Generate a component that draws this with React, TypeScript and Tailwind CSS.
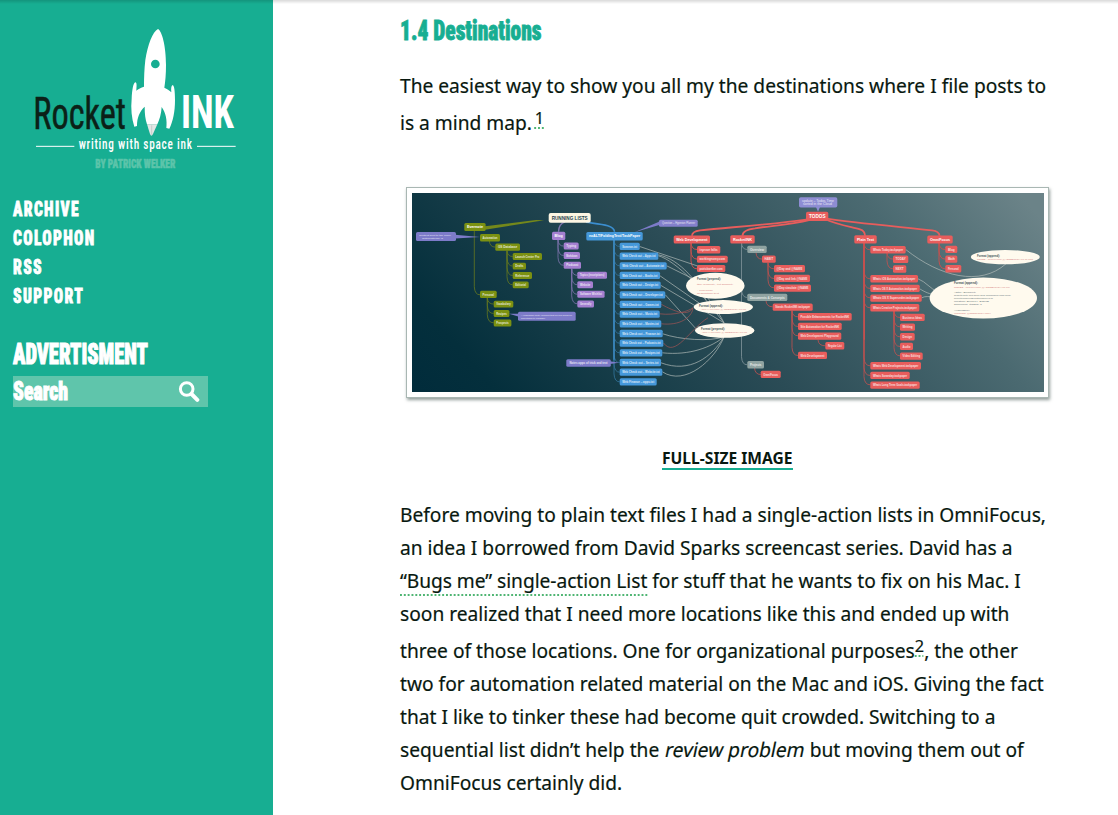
import type { ReactNode } from "react";

const OLIVE = "#7b9112";
const PURPLE = "#a47fd0";
const NOTE = "#7d7bc9";
const BLUE = "#4598da";
const RED = "#e85d5c";
const GRAY = "#8fa3a1";

type MapNode = [x: number, y: number, w: number, h: number, fill: string, label: string];

const nodes: MapNode[] = [
  [464.3, 223.3, 21.3, 8, OLIVE, "Evernote"],
  [480, 234.3, 20, 7.3, OLIVE, "Automation"],
  [495.3, 243.7, 24.7, 7.3, OLIVE, "GS Database"],
  [512.7, 253.3, 29.3, 6.8, OLIVE, "Launch Center Pro"],
  [512.7, 263, 13.3, 6.8, OLIVE, "Drafts"],
  [512.7, 272.3, 19.3, 6.8, OLIVE, "Reference"],
  [512.7, 281.7, 16, 6.8, OLIVE, "Editorial"],
  [480, 291, 16.7, 7.3, OLIVE, "Personal"],
  [493.7, 301, 19.6, 6.8, OLIVE, "Vocabulary"],
  [493.7, 310.3, 15.7, 6.8, OLIVE, "Recipes"],
  [493.7, 319.8, 17.7, 6.8, OLIVE, "Prospects"],
  [552, 232, 13.3, 8.3, PURPLE, "Blog"],
  [563.7, 242.7, 15, 7, PURPLE, "Typing"],
  [563.7, 252.3, 16.3, 7, PURPLE, "Markdown"],
  [563.7, 262, 17.3, 7, PURPLE, "Podcast"],
  [577.3, 272, 29.7, 7, PURPLE, "Topics (inscriptions)"],
  [577.3, 281.5, 15.7, 7, PURPLE, "Website"],
  [577.3, 291, 27.3, 7, PURPLE, "Software Wishlist"],
  [577.3, 300.7, 16.7, 7, PURPLE, "Generally"],
  [586.3, 232.2, 56.4, 8.5, BLUE, "nxALT/FoldingText/TaskPaper"],
  [673.7, 235.7, 36.3, 8, RED, "Web Development"],
  [697, 246.3, 23.3, 7.3, RED, "inprove falks"],
  [697, 256, 30.7, 7, RED, "workingnomy.com"],
  [697, 265.3, 28.3, 7, RED, "patrickwelker.com"],
  [730.3, 235.5, 24.4, 8.3, RED, "RocketINK"],
  [747.3, 246, 19.4, 7.3, GRAY, "Overview"],
  [762, 255.7, 13.7, 7.3, RED, "HABIT"],
  [774, 265.3, 31, 7.2, RED, "@Day and @NAME"],
  [774, 275, 36, 7.2, RED, "@Day and link @NAME"],
  [774, 284.7, 37, 7.2, RED, "@Day simulate @NAME"],
  [747.3, 294, 40, 7.3, GRAY, "Documents & Concepts"],
  [772.7, 303.7, 40, 7.3, RED, "Stands RocketINK taskpaper"],
  [798, 313.3, 53.7, 7.3, RED, "Possible Enhancements for RocketINK"],
  [798, 323, 43.7, 7.3, RED, "Site Automation for RocketINK"],
  [798, 332.7, 43.3, 7.3, RED, "Web Development Playground"],
  [825.3, 342.3, 19, 7.3, RED, "Regular List"],
  [798, 352, 29, 7.3, RED, "Web Development"],
  [747.3, 361.3, 16.7, 7.3, GRAY, "Projects"],
  [760.7, 371, 20, 7.3, RED, "OmniFocus"],
  [854.3, 235.5, 22.4, 8.2, RED, "Plain Text"],
  [870.3, 246.3, 35.4, 7.3, RED, "Whats Today.taskpaper"],
  [893, 255.7, 15.3, 7.5, RED, "TODAY"],
  [893, 265.5, 13.3, 7.5, RED, "NEXT"],
  [870.3, 275.3, 47.7, 7.3, RED, "Whats iOS Automation.taskpaper"],
  [870.3, 285, 49.4, 7.3, RED, "Whats OS X Automation.taskpaper"],
  [870.3, 294.7, 51.4, 7.3, RED, "Whats OS X Superseder.taskpaper"],
  [870.3, 304.3, 49, 7.3, RED, "Whats Creative Projects.taskpaper"],
  [900, 314, 24.7, 7.3, RED, "Business Ideas"],
  [900, 323.7, 15, 7.3, RED, "Writing"],
  [900, 333.3, 14.7, 7.3, RED, "Design"],
  [900, 343, 13, 7.3, RED, "Audio"],
  [900, 352.7, 22.7, 7.3, RED, "Video Editing"],
  [870.3, 362.3, 50.7, 7.3, RED, "Whats Web Development.taskpaper"],
  [870.3, 372, 39.4, 7.3, RED, "Whats Someday.taskpaper"],
  [870.3, 381.7, 49.4, 7.3, RED, "Whats Long Term Goals.taskpaper"],
  [927.3, 235.7, 25.4, 8, RED, "OmniFocus"],
  [945.3, 246, 12, 7.3, RED, "Blog"],
  [945.3, 255.7, 12, 7.3, RED, "Math"],
  [945.3, 265.3, 16, 7.3, RED, "Personal"],
];

const blueLabels: [number, string][] = [
  [639.7, "Someon.txt"],
  [658.3, "Web Check out – Apps.txt"],
  [666.7, "Web Check out – Automate.txt"],
  [660, "Web Check out – Books.txt"],
  [660.7, "Web Check out – Design.txt"],
  [665.3, "Web Check out – Developer.txt"],
  [661.3, "Web Check out – Games.txt"],
  [659.7, "Web Check out – Music.txt"],
  [661.3, "Web Check out – Movies.txt"],
  [662.7, "Web Check out – Finance.txt"],
  [663.3, "Web Check out – Podcasts.txt"],
  [662.3, "Web Check out – Recipes.txt"],
  [661, "Web Check out – Series.txt"],
  [662.3, "Web Check out – Website.txt"],
  [656.7, "Web Finance – apps.txt"],
];

const blueNodes: MapNode[] = blueLabels.map(([end, label], i) => [
  619.7,
  243 + i * 9.67,
  end - 619.7,
  7.3,
  BLUE,
  label,
]);

function elbows(trunkX: number, startY: number, childX: number, ys: number[]) {
  return ys
    .map((y) => {
      const r = Math.min(y - startY, 8);
      return `M${trunkX} ${startY}V${y - r}Q${trunkX + 0.5} ${y} ${childX} ${y}`;
    })
    .join("");
}

const blueYs = blueLabels.map((_, i) => 246.7 + i * 9.67);

function Mini({ x, y, w, size = 2.9, fill = "#fff", bold = false, children }: {
  x: number; y: number; w: number; size?: number; fill?: string; bold?: boolean; children: string;
}) {
  return (
    <text x={x} y={y} fontSize={size} fill={fill} fontWeight={bold ? 700 : 400} textLength={w} lengthAdjust="spacingAndGlyphs">
      {children}
    </text>
  );
}

function MindMap() {
  return (
    <svg
      className="block h-[199px] w-[632px]"
      viewBox="412 193.2 632 199"
      fontFamily="'Liberation Sans', sans-serif"
      role="img"
      aria-label="Mind map"
    >
      <defs>
        <linearGradient id="sky" gradientUnits="userSpaceOnUse" x1="470" y1="480" x2="925" y2="85">
          <stop offset="0" stopColor="#002b3b" />
          <stop offset="0.13" stopColor="#042f3c" />
          <stop offset="0.5" stopColor="#2b4c56" />
          <stop offset="0.8" stopColor="#4b6a71" />
          <stop offset="1" stopColor="#6b8388" />
        </linearGradient>
      </defs>
      <rect x="412" y="193" width="632" height="200" fill="url(#sky)" />

      <g fill="none" strokeWidth="0.8">
        <g stroke="#64791f">
          <path d={elbows(474.3, 231, 480, [295])} />
          <path d={elbows(489.3, 241, 495.3, [247.3])} />
          <path d={elbows(507, 251, 512.7, [256.7, 266.3, 275.7, 285])} />
          <path d={elbows(487.3, 298, 493.7, [304.3, 313.7, 323])} />
        </g>
        <g stroke="#7f74ae">
          <path d={elbows(558, 240, 563.7, [246.3, 255.7, 265.5])} />
          <path d={elbows(571.7, 269, 577.3, [275.5, 285, 294.5, 304])} />
          <path d="M565 222Q558.7 224 558.5 232" strokeWidth="1.4" />
        </g>
        <g stroke="#34769f">
          <path d={elbows(614, 240, 619.7, blueYs)} />
          <path d="M614 240V360" stroke="#3d8ac4" strokeWidth="1.3" />
        </g>
        <path d="M586 222.5C600 224.500 614 225 614.5 232" stroke="#3b8ecf" strokeWidth="1.6" />
        <g stroke="#c4514f">
          <path d={elbows(691, 243, 697, [249.7, 259.3, 269])} strokeWidth="1" />
          <path d={elbows(756, 253, 762, [259.3])} />
          <path d={elbows(768, 263, 774, [269, 278.7, 288])} />
          <path d={elbows(766, 301, 772.7, [307])} />
          <path d={elbows(792, 311, 798, [317, 326.7, 336, 355.7])} />
          <path d={elbows(818, 340, 825.3, [346])} />
          <path d={elbows(754.5, 368, 760.7, [374.7])} />
          <path d={elbows(864, 243, 870.3, [250, 279, 288.7, 298, 308, 366, 375.7, 385])} />
          <path d="M864.3 243V340" strokeWidth="1.3" />
          <path d={elbows(887, 253, 893, [259.3, 269])} />
          <path d={elbows(894, 311, 900, [317.7, 327, 337, 346.7, 356])} />
          <path d={elbows(939, 243, 945.3, [249.7, 259.3, 269])} strokeWidth="1" />
        </g>
        <g stroke="#71878e">
          <path d={elbows(741.5, 243, 747.3, [249.7, 297.7, 365])} strokeWidth="1" />
        </g>
        <g stroke={RED} strokeWidth="1.8">
          <path d="M808 219.5C770 225 735 227 700 230.5Q692 231.5 692 236" />
          <path d="M810 220C790 225 770 226 755 228.5Q742.5 230 742.5 236" />
          <path d="M824 219C840 226 852 227 860 229.5Q865 231 865 236" />
          <path d="M824 218.5C855 223 900 227 932 230.5Q939.5 231.5 939.5 236" />
        </g>
        <g stroke="#b0bab8" strokeWidth="0.7">
          <path d="M639.7 246.7L700 267" />
          <path d="M658.3 256C675 260 710 295 724 323" />
          <path d="M666.7 266L695 280M660 276L706 308M660.7 285.500L724 323M665.300 295L696 329" />
          <path d="M662.700 334C680 340 710 342 724 337M662.300 353C690 356 712 347 724 337M661 363C690 374 712 357 724 337M662.300 372C685 387 715 360 724 337" />
          <path d="M658.300 255C680 259 700 285 706 300M700 293L724 323" />
          <path d="M905.700 249.700C940 277 980 287 1006 264" />
          <path d="M918 279C926 282 930 289 938 292M919.700 289C926 293 930 294 934 295M921.700 298C925 296 930 297 932 297" />
        </g>
        <g stroke="#a25555" strokeWidth="0.7">
          <path d="M661.300 304.500C675 312 688 317 693 308M659.700 314C675 316 689 311 693 308M661.300 324C680 326 691 318 693 309M663.300 343C675 359 690 329 708 318" />
        </g>
      </g>

      <path d="M485 226.500L536 220.300L544 220.500L485 230Z" fill="#74881b" />
      <g fill={NOTE}>
        <path d="M455 235L480 237.300L455 238.700Z" />
        <path d="M519 314L509 314L519 317Z" />
        <path d="M610 361.500L619 363L610 364.300Z" />
        <path d="M659 222L634.500 232.500L660 225Z" />
        <path d="M815.500 206L818 212L820.500 206Z" fill="#8e8dd3" />
        <rect x="416" y="232.300" width="40" height="9" rx="1.600" />
        <rect x="518" y="312" width="57.700" height="9" rx="1.600" />
        <rect x="566.300" y="359.500" width="44.500" height="7.500" rx="1.500" />
        <rect x="659" y="220" width="38.700" height="7" rx="1.500" fill="#8380cc" />
        <rect x="799" y="197.500" width="38.300" height="10.300" rx="1.800" fill="#8e8dd3" />
      </g>
      <g opacity="0.8">
        <Mini x={419} y={236.200} w={32} size={2.500}>Content sent to the Inbox</Mini>
        <Mini x={422} y={239.500} w={21} size={2.500}>automatically 5</Mini>
        <Mini x={521} y={316} w={51} size={2.500}>A Markdown Note: Remind that keying would be</Mini>
        <Mini x={521} y={319.300} w={24} size={2.500}>something to consider</Mini>
        <Mini x={569.500} y={364.300} w={38} size={2.700} bold>Notes apps of trick and text</Mini>
        <Mini x={662} y={224.500} w={33} size={2.700}>Question – Hyperion Planner</Mini>
        <Mini x={802} y={202} w={32} size={2.700}>update – Todos Time</Mini>
        <Mini x={803} y={205.600} w={29} size={2.700}>sorted in the Cloud</Mini>
      </g>

      {[...nodes, ...blueNodes].map(([x, y, w, h, fill, label], i) => (
        <g key={i}>
          <rect x={x} y={y} width={w} height={h} rx="1.500" fill={fill} />
          <g opacity={h >= 8 ? 1 : 0.78}>
            <Mini x={x + 2.600} y={y + h / 2 + 1.200} w={w - 5.200} size={h >= 8 ? 3.600 : 2.900} bold>{label}</Mini>
          </g>
        </g>
      ))}

      <rect x="548.700" y="213.300" width="42" height="9.700" rx="2" fill="#fdf6e3" />
      <Mini x={551.700} y={220.200} w={36} size={5.300} bold fill="#26424c">RUNNING LISTS</Mini>
      <rect x="806" y="212" width="22.300" height="9.300" rx="1.800" fill={RED} />
      <Mini x={809} y={218.700} w={16.500} size={5.200} bold>TODOS</Mini>

      <g fill="#fffaee">
        <ellipse cx="715.300" cy="286" rx="29.300" ry="13" />
        <ellipse cx="723.300" cy="307.300" rx="29.700" ry="7" />
        <ellipse cx="724.700" cy="330.700" rx="29.700" ry="7.300" />
        <ellipse cx="1005.300" cy="257.300" rx="34.500" ry="7.200" />
        <ellipse cx="983.300" cy="298.300" rx="53.700" ry="20.500" />
      </g>
      <g>
        <Mini x={697} y={279.800} w={24} size={3.200} bold fill="#44545a">Format (prepend):</Mini>
        <Mini x={697} y={285.500} w={36} size={2.400} fill="#d58080">title (Project), “txt snippet”</Mini>
        <Mini x={697} y={291.500} w={16} size={2.400} fill="#d58080">- ???(Link)</Mini>
        <Mini x={697} y={294.500} w={22} size={2.400} fill="#d58080">description text</Mini>
        <Mini x={699} y={307} w={24} size={3.200} bold fill="#44545a">Format (append):</Mini>
        <Mini x={700} y={310.500} w={46} size={2.400} fill="#d58080">- ???(YY/LL)(MM) @ADDED[RICH-??-??]</Mini>
        <Mini x={701} y={330.500} w={24} size={3.200} bold fill="#44545a">Format (prepend):</Mini>
        <Mini x={701} y={333.700} w={46} size={2.400} fill="#d58080">- ???(YY/LL)(MM) @ADDED[RICH-??-??]</Mini>
        <Mini x={977} y={257.600} w={23} size={3.200} bold fill="#44545a">Format (append):</Mini>
        <Mini x={977} y={260.600} w={56} size={2.400} fill="#d58080">NOTES - ???(LL)(MM) @ADDED[RICH-??-??-MM]</Mini>
        <Mini x={954} y={284.700} w={24} size={3.200} bold fill="#44545a">Format (append):</Mini>
        <Mini x={954} y={288} w={56} size={2.400} fill="#d58080">NOTES - ???(LL)(MM) @ADDED(RICH-??-??)</Mini>
        <Mini x={954} y={293.600} w={22} size={2.400} fill="#66757a">“Title: Snippet”</Mini>
        <Mini x={954} y={296.700} w={57} size={2.400} fill="#66757a">defaults write com.apple.dock workspaces-edge-delay</Mini>
        <Mini x={954} y={299.700} w={39} size={2.400} fill="#66757a">kMMItemRulesDurationQueryFor</Mini>
        <Mini x={954} y={302.700} w={35} size={2.400} fill="#66757a">location SIMPLY SOME</Mini>
        <Mini x={954} y={305.700} w={28} size={2.400} fill="#66757a">someone (tasks) 7</Mini>
        <Mini x={954} y={311.500} w={16} size={2.400} fill="#66757a">“Variable”</Mini>
        <Mini x={954} y={314.500} w={37} size={2.400} fill="#d58080">(clipboard: @added(RICH-MM))</Mini>
      </g>
    </svg>
  );
}

function Logo() {
  return (
    <svg
      className="block h-[180px] w-[273px] shrink-0"
      viewBox="0 0 819 540"
      fontFamily="Roboto, sans-serif"
      role="img"
      aria-label="Rocket Ink"
    >
      <path
        fill="#fff"
        d="M474 87C486 93 498 138 498 195C498 222 496 245 493 263C501 267 508 271 514 277C513 266 513 258 518 255C523 257 525 275 525 300C525 335 519 365 508 386L499 384C502 360 497 338 485 321C484 342 478 360 472 373H441C436 358 434 342 434 320C419 334 411 352 411 378L403 380C395 355 392 325 395 296C396 270 400 248 406 247C411 248 410 258 409 272C415 267 423 263 432 260C432 235 433 205 436 180C443 135 458 95 474 87Z"
      />
      <circle cx="466" cy="192" r="13" fill="#17ae92" />
      <path d="M441 373H472L459 402Q454 412 450 402Z" fill="#e3e6e5" />
      <path d="M455 376V404" stroke="#b9bfbd" strokeWidth="2" />
      <g style={{ fontStretch: "75%" }}>
        <text x="100" y="386" fontSize="134" fontWeight="400" fill="#0b2117" stroke="#0b2117" strokeWidth="1.5" textLength="278" lengthAdjust="spacingAndGlyphs">Rocket</text>
        <text x="543" y="384" fontSize="136" fontWeight="700" fill="#fff" textLength="159" lengthAdjust="spacingAndGlyphs">INK</text>
        <text x="236" y="448" fontSize="43" fontWeight="500" fill="#fff" letterSpacing="3" textLength="342" lengthAdjust="spacingAndGlyphs">writing with space ink</text>
        <text x="286" y="504" fontSize="36" fontWeight="900" fill="#5cc4aa" stroke="#5cc4aa" strokeWidth="1.5" textLength="240" lengthAdjust="spacingAndGlyphs">BY PATRICK WELKER</text>
      </g>
      <path d="M108 439H223M591 439H707" stroke="#fff" strokeWidth="3" />
    </svg>
  );
}

function Line({ raised = false, children }: { raised?: boolean; children: ReactNode }) {
  return <span className={raised ? "block h-[37px] pt-1" : "block h-[33px]"}>{children}</span>;
}

function Note({ children }: { children: ReactNode }) {
  return (
    <a
      href="#"
      className="align-[6px] text-[17px] leading-none underline decoration-[#4fb573] decoration-dotted decoration-2 underline-offset-[3px]"
    >
      {children}
    </a>
  );
}

const links = ["ARCHIVE", "COLOPHON", "RSS", "SUPPORT"];

export default function App() {
  return (
    <div className="relative flex h-[815px] w-[1118px] overflow-hidden bg-white font-['Noto_Sans',sans-serif] text-[#08180f]">
      <aside className="flex w-[273px] shrink-0 flex-col bg-[#17ae92] font-[Roboto,sans-serif] font-black text-white [font-stretch:75%]">
        <Logo />
        <nav className="mt-[15px] flex flex-col pl-[13px]">
          {links.map((label) => (
            <a
              key={label}
              href="#"
              className="origin-left scale-x-[0.74] text-[21px] leading-[29px] tracking-[1.8px] [-webkit-text-stroke:0.8px_white]"
            >
              {label}
            </a>
          ))}
        </nav>
        <h2 className="mt-[26px] ml-[13px] w-[220px] origin-left scale-x-[0.71] text-[29px] leading-[34px] [-webkit-text-stroke:1.1px_white]">
          ADVERTISMENT
        </h2>
        <div className="mt-[5px] ml-[13px] flex h-[31px] w-[195px] items-center justify-between bg-[#5fc5ab] pr-[8px]">
          <span className="w-[90px] origin-left scale-x-[0.76] text-[26px] leading-[31px] [-webkit-text-stroke:1px_white]">Search</span>
          <svg className="h-[22px] w-[22px]" viewBox="0 0 22 22" fill="none" stroke="#fff">
            <circle cx="8.700" cy="8" r="6.300" strokeWidth="3" />
            <path d="M13.500 13L19.300 18.800" strokeWidth="4" strokeLinecap="round" />
          </svg>
        </div>
      </aside>

      <main className="flex w-[655px] flex-col pt-[15px] pl-[127px]">
        <div className="w-[655px]">
          <h1 className="origin-left scale-x-[0.793] font-[Roboto,sans-serif] text-[27px] leading-8 font-black text-[#17ae92] [font-stretch:75%] [-webkit-text-stroke:0.8px_#17ae92]">
            1.4 Destinations
          </h1>
          <p className="mt-[22px] w-[700px] origin-left scale-x-[0.9585] text-[20px] leading-[33px] whitespace-nowrap [-webkit-text-stroke:0.2px_#08180f]">
            <Line>The easiest way to show you all my the destinations where I file posts to</Line>
            <Line raised>
              is a mind map.<span className="pl-[3px]"><Note>1</Note></span>
            </Line>
          </p>
          <figure className="mt-[48px] ml-[6px] h-[211px] w-[643px] border border-[#a9b7b3] bg-white p-[5px] shadow-[1px_2px_3px_rgba(60,80,75,0.55)]">
            <MindMap />
          </figure>
          <div className="mt-[48px] flex justify-center text-[16px] leading-[24px] font-bold">
            <a href="#" className="h-[24px] w-[131px] border-b-2 border-[#17ae92]">
              <span className="block origin-left scale-x-[0.975] whitespace-nowrap">FULL-SIZE IMAGE</span>
            </a>
          </div>
          <p className="mt-[28px] w-[700px] origin-left scale-x-[0.9585] text-[20px] leading-[33px] whitespace-nowrap [-webkit-text-stroke:0.2px_#08180f]">
            <Line>Before moving to plain text files I had a single-action lists in OmniFocus,</Line>
            <Line>an idea I borrowed from David Sparks screencast series. David has a</Line>
            <Line>
              <a href="#" className="border-b-2 border-dotted border-[#4fb573] tracking-[-0.05px]">“Bugs me” single-action List</a> for stuff that he wants to fix on his Mac. I
            </Line>
            <Line>soon realized that I need more locations like this and ended up with</Line>
            <Line raised>
              three of those locations. One for organizational purposes<Note>2</Note>, the other
            </Line>
            <Line>two for automation related material on the Mac and iOS. Giving the fact</Line>
            <Line>that I like to tinker these had become quit crowded. Switching to a</Line>
            <Line>
              sequential list didn’t help the{" "}
              <em className="inline-block -skew-x-12 pl-px not-italic">review problem</em> but moving them out of
            </Line>
            <Line>OmniFocus certainly did.</Line>
          </p>
        </div>
      </main>
      <div className="absolute inset-x-0 top-0 h-1 bg-linear-to-b from-black/15 to-transparent" />
    </div>
  );
}
